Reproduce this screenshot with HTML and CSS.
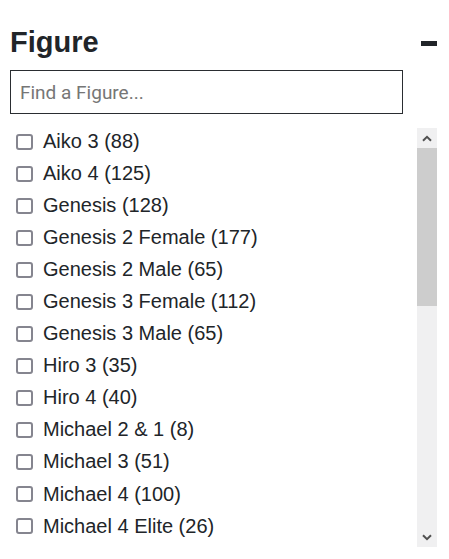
FILE: index.html
```html
<!DOCTYPE html>
<html lang="en">
<head>
<meta charset="utf-8">
<title>Figure filter</title>
<link rel="stylesheet" href="styles.css">
</head>
<body>
<section class="filter">
  <div class="filter-head">
    <h2 class="filter-title">Figure</h2>
    <span class="collapse" aria-label="Collapse"></span>
  </div>
  <input class="search" type="text" placeholder="Find a Figure...">
  <div class="list-wrap">
    <ul class="options">
      <li class="option"><input type="checkbox" class="check"><span class="label">Aiko 3 (88)</span></li>
      <li class="option"><input type="checkbox" class="check"><span class="label">Aiko 4 (125)</span></li>
      <li class="option"><input type="checkbox" class="check"><span class="label">Genesis (128)</span></li>
      <li class="option"><input type="checkbox" class="check"><span class="label">Genesis 2 Female (177)</span></li>
      <li class="option"><input type="checkbox" class="check"><span class="label">Genesis 2 Male (65)</span></li>
      <li class="option"><input type="checkbox" class="check"><span class="label">Genesis 3 Female (112)</span></li>
      <li class="option"><input type="checkbox" class="check"><span class="label">Genesis 3 Male (65)</span></li>
      <li class="option"><input type="checkbox" class="check"><span class="label">Hiro 3 (35)</span></li>
      <li class="option"><input type="checkbox" class="check"><span class="label">Hiro 4 (40)</span></li>
      <li class="option"><input type="checkbox" class="check"><span class="label">Michael 2 &amp; 1 (8)</span></li>
      <li class="option"><input type="checkbox" class="check"><span class="label">Michael 3 (51)</span></li>
      <li class="option"><input type="checkbox" class="check"><span class="label">Michael 4 (100)</span></li>
      <li class="option"><input type="checkbox" class="check"><span class="label">Michael 4 Elite (26)</span></li>
    </ul>
    <div class="scrollbar" aria-hidden="true">
      <div class="sb-btn">
        <svg width="10" height="7" viewBox="0 0 10 7"><path d="M1 5.8 L5 1.8 L9 5.8" fill="none" stroke="#505050" stroke-width="2"/></svg>
      </div>
      <div class="sb-track">
        <div class="sb-thumb"></div>
      </div>
      <div class="sb-btn sb-btn-down">
        <svg width="10" height="7" viewBox="0 0 10 7"><path d="M1 1.2 L5 5.2 L9 1.2" fill="none" stroke="#505050" stroke-width="2"/></svg>
      </div>
    </div>
  </div>
</section>
</body>
</html>
```

FILE: styles.css
```css
html, body {
  margin: 0;
  background: #ffffff;
}

body {
  padding: 25px 12px 0 10px;
  font-family: "Liberation Sans", Arial, sans-serif;
  color: #212529;
}

.filter-head {
  display: flex;
  justify-content: space-between;
  align-items: flex-start;
}

.filter-title {
  margin: 0;
  font-size: 29px;
  line-height: 34px;
  font-weight: bold;
  color: #212529;
}

.collapse {
  display: block;
  width: 16px;
  height: 5px;
  margin-top: 16px;
  background: #212529;
}

.search {
  display: block;
  box-sizing: border-box;
  width: 393px;
  height: 44px;
  margin: 11px 0 0 0;
  padding: 0 9px;
  border: 1px solid #2a2d31;
  border-radius: 0;
  font-family: Roboto, "Liberation Sans", sans-serif;
  font-size: 19px;
  color: #212529;
  background: #ffffff;
  outline: none;
}

.search::placeholder {
  color: #767676;
}

.list-wrap {
  display: flex;
  height: 419px;
  margin-top: 14px;
}

.options {
  flex: 1;
  list-style: none;
  margin: 0;
  padding: 0 0 0 6px;
  overflow: hidden;
}

.option {
  display: flex;
  align-items: center;
  height: 27px;
  margin-bottom: 5.06px;
}

.check {
  appearance: none;
  -webkit-appearance: none;
  flex: none;
  box-sizing: border-box;
  width: 17px;
  height: 16px;
  margin: 0 10px 0 0;
  border: 2px solid #85858f;
  border-radius: 3px;
  background: #ffffff;
}

.label {
  font-size: 20px;
  line-height: 27px;
  white-space: nowrap;
}

.scrollbar {
  flex: none;
  width: 20px;
  display: flex;
  flex-direction: column;
  background: #f0f0f1;
}

.sb-btn {
  flex: none;
  height: 20px;
  display: flex;
  align-items: center;
  justify-content: center;
}

.sb-btn svg {
  display: block;
}

.sb-track {
  flex: 1;
}

.sb-thumb {
  height: 158px;
  background: #cdcdcd;
}
```
